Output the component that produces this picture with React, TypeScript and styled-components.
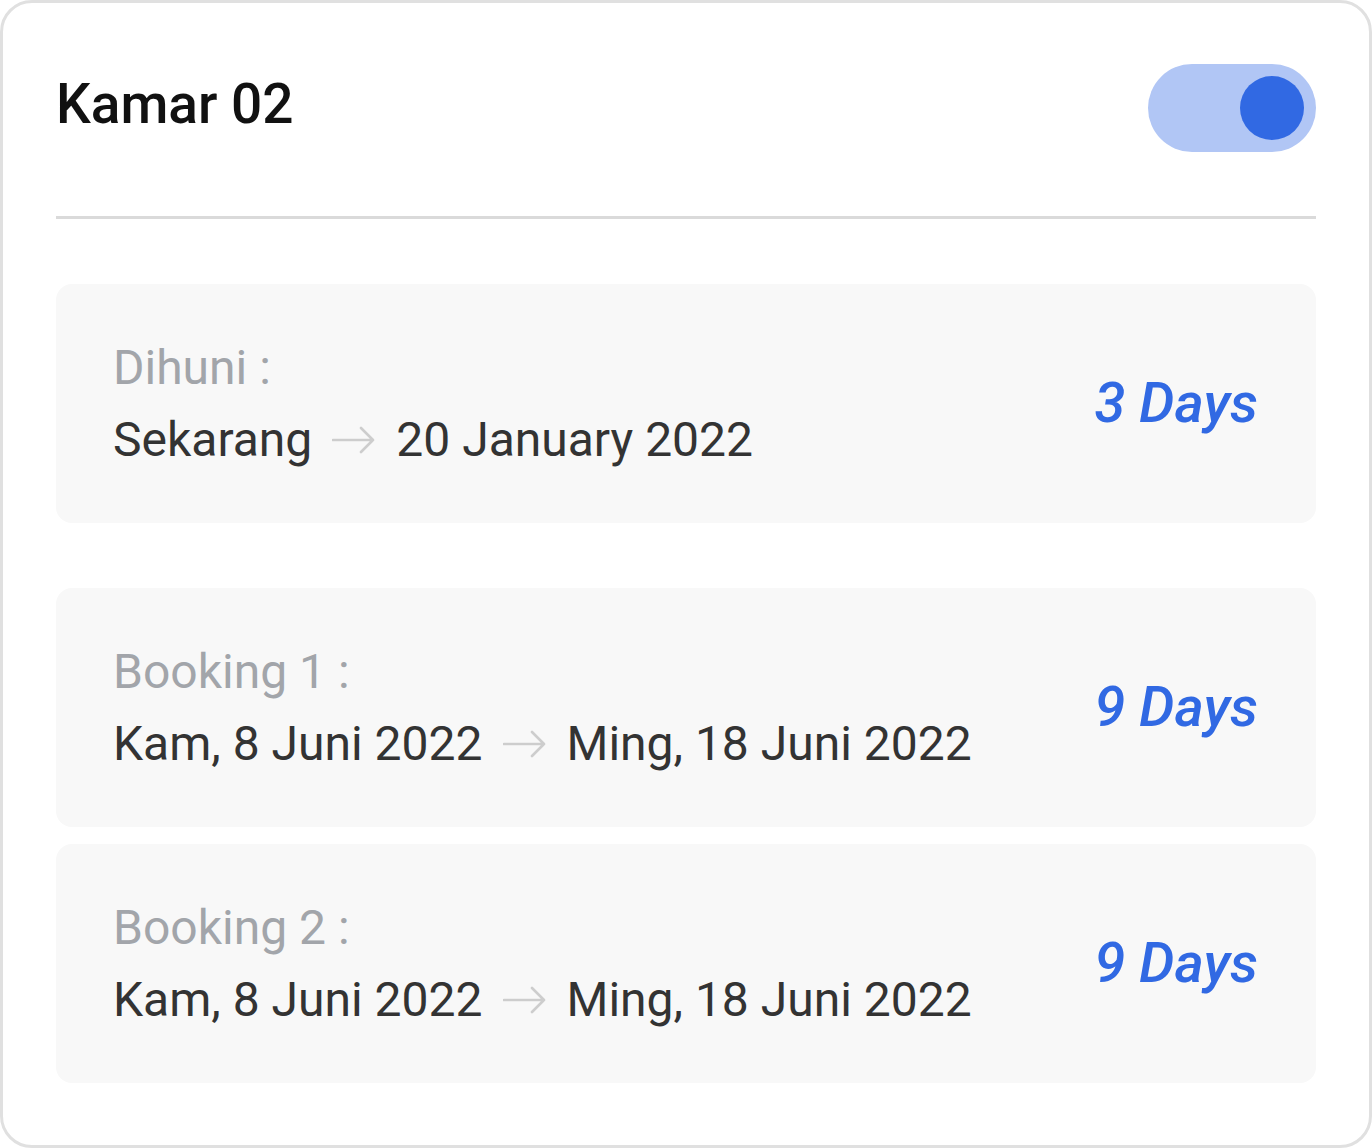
import React from "react";
import styled, { createGlobalStyle } from "styled-components";

const Global = createGlobalStyle`
  html, body { margin: 0; padding: 0; background: #ffffff; }
  body { font-family: Roboto, "Noto Sans", sans-serif; }
  * { box-sizing: border-box; }
`;

const Card = styled.div`
  width: 1372px;
  height: 1148px;
  border: 3px solid #e0e0e0;
  border-radius: 32px;
  background: #ffffff;
  padding: 61px 53px 62px 53px;
  display: flex;
  flex-direction: column;
`;

const Header = styled.div`
  display: flex;
  align-items: center;
  justify-content: space-between;
  height: 88px;
`;

const Title = styled.h1`
  margin: -8px 0 0 0;
  font-family: Roboto, sans-serif;
  font-weight: 500;
  font-size: 55px;
  color: #111111;
  letter-spacing: 0;
`;

const Toggle = styled.div<{ $on: boolean }>`
  width: 168px;
  height: 88px;
  border-radius: 44px;
  background: #b1c6f5;
  display: flex;
  align-items: center;
  justify-content: ${(p) => (p.$on ? "flex-end" : "flex-start")};
  padding: 0 12px;
`;

const Knob = styled.div`
  width: 64px;
  height: 64px;
  border-radius: 50%;
  background: #3169e3;
`;

const Divider = styled.hr`
  margin: 64px 0 0 0;
  border: none;
  height: 3px;
  background: #dadada;
`;

const Sections = styled.div`
  margin-top: 65px;
  display: flex;
  flex-direction: column;
  gap: 65px;
`;

const Group = styled.div`
  display: flex;
  flex-direction: column;
  gap: 17px;
`;

const Panel = styled.div`
  height: 239px;
  border-radius: 16px;
  background: #f8f8f8;
  padding: 0 58px 0 57px;
  display: flex;
  align-items: center;
  justify-content: space-between;
`;

const Info = styled.div`
  display: flex;
  flex-direction: column;
`;

const Label = styled.div`
  font-size: 48px;
  line-height: 72px;
  color: #a2a5aa;
  font-weight: 400;
`;

const Range = styled.div`
  display: flex;
  align-items: center;
  gap: 20px;
  font-size: 48px;
  line-height: 72px;
  color: #333333;
  font-weight: 400;
`;

const Duration = styled.div`
  font-size: 56px;
  font-style: italic;
  font-weight: 500;
  color: #3169e3;
  margin-top: -2px;
`;

const Arrow = () => (
  <svg width="44" height="28" viewBox="0 0 44 28" fill="none">
    <path
      d="M1 14 H41 M29 2 L41 14 L29 26"
      stroke="#cdcdcd"
      strokeWidth="2.6"
      strokeLinecap="round"
      strokeLinejoin="round"
    />
  </svg>
);

type Item = { label: string; from: string; to: string; days: string };

const Row = ({ item }: { item: Item }) => (
  <Panel>
    <Info>
      <Label>{item.label}</Label>
      <Range>
        <span>{item.from}</span>
        <Arrow />
        <span>{item.to}</span>
      </Range>
    </Info>
    <Duration>{item.days}</Duration>
  </Panel>
);

const current: Item = {
  label: "Dihuni :",
  from: "Sekarang",
  to: "20 January 2022",
  days: "3 Days",
};

const bookings: Item[] = [
  { label: "Booking 1 :", from: "Kam, 8 Juni 2022", to: "Ming, 18 Juni 2022", days: "9 Days" },
  { label: "Booking 2 :", from: "Kam, 8 Juni 2022", to: "Ming, 18 Juni 2022", days: "9 Days" },
];

export default function App() {
  return (
    <>
      <Global />
      <Card>
        <Header>
          <Title>Kamar 02</Title>
          <Toggle $on>
            <Knob />
          </Toggle>
        </Header>
        <Divider />
        <Sections>
          <Group>
            <Row item={current} />
          </Group>
          <Group>
            {bookings.map((b) => (
              <Row key={b.label} item={b} />
            ))}
          </Group>
        </Sections>
      </Card>
    </>
  );
}
